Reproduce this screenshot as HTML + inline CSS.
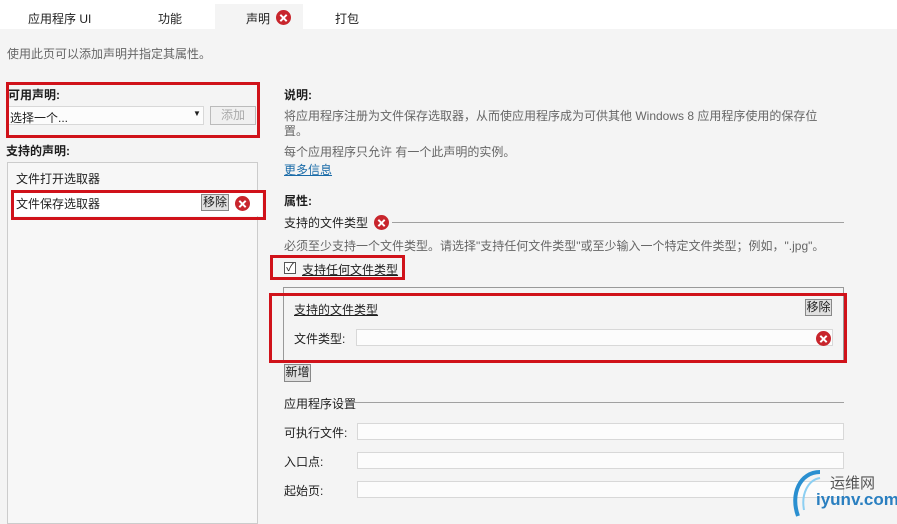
<!DOCTYPE html><html><head><meta charset="utf-8"><style>
body{margin:0;width:897px;height:517px;overflow:hidden;background:#f4f4f4;font-family:"Liberation Sans","Noto Sans CJK SC",sans-serif;font-size:12px;color:#1e1e1e;position:relative}
.a{position:absolute;white-space:nowrap}
.g{color:#666}
.red{position:absolute;border:3px solid #d0121a;box-sizing:border-box}
.x{position:absolute;width:15px;height:15px;border-radius:50%;background:#c8252c}
.x:before,.x:after{content:"";position:absolute;left:3px;top:6.5px;width:9px;height:2px;background:#fff;transform:rotate(45deg)}
.x:after{transform:rotate(-45deg)}
.inp{position:absolute;background:#fcfcfc;border:1px solid #d8d8d8;box-sizing:border-box}
.btn{position:absolute;background:#e0e0e0;border:1px solid #888;box-sizing:border-box;font-size:12px;text-align:center;line-height:15px}
.line{position:absolute;height:1px;background:#a0a0a0}
</style></head><body>
<div class="a" style="left:0;top:0;width:897px;height:29px;background:#fff"></div>
<div class="a" style="left:215px;top:4px;width:88px;height:25px;background:#f4f4f4"></div>
<div class="a" style="left:28px;top:10px">应用程序 UI</div>
<div class="a" style="left:158px;top:10px">功能</div>
<div class="a" style="left:246px;top:10px">声明</div><div class="x" style="left:276px;top:10px"></div>
<div class="a" style="left:335px;top:10px">打包</div>
<div class="a g" style="left:7px;top:45px">使用此页可以添加声明并指定其属性。</div>
<div class="a" style="left:8px;top:86px;font-weight:bold">可用声明:</div>
<div class="inp" style="left:8px;top:106px;width:196px;height:19px"></div>
<div class="a" style="left:10px;top:109px">选择一个...</div>
<div class="a" style="left:193px;top:109px;font-size:8px">▼</div>
<div class="btn" style="left:210px;top:106px;width:46px;height:19px;background:#f0f0f0;color:#aaa;border-color:#bbb;line-height:17px">添加</div>
<div class="red" style="left:6px;top:82px;width:254px;height:56px"></div>
<div class="a" style="left:6px;top:142px;font-weight:bold">支持的声明:</div>
<div class="a" style="left:7px;top:162px;width:249px;height:360px;border:1px solid #ccc;background:#f7f7f7"></div>
<div class="a" style="left:16px;top:170px">文件打开选取器</div>
<div class="a" style="left:14px;top:192px;width:248px;height:24px;background:#fff"></div>
<div class="a" style="left:16px;top:195px">文件保存选取器</div>
<div class="btn" style="left:201px;top:194px;width:28px;height:17px">移除</div>
<div class="x" style="left:235px;top:196px"></div>
<div class="red" style="left:11px;top:190px;width:255px;height:30px"></div>
<div class="a" style="left:284px;top:86px;font-weight:bold">说明:</div>
<div class="a g" style="left:284px;top:107px">将应用程序注册为文件保存选取器，从而使应用程序成为可供其他 Windows 8 应用程序使用的保存位</div>
<div class="a g" style="left:284px;top:122px">置。</div>
<div class="a g" style="left:284px;top:143px">每个应用程序只允许 有一个此声明的实例。</div>
<div class="a" style="left:284px;top:161px;color:#1a6ba8;text-decoration:underline">更多信息</div>
<div class="a" style="left:284px;top:192px;font-weight:bold">属性:</div>
<div class="a" style="left:284px;top:214px">支持的文件类型</div><div class="x" style="left:374px;top:215px"></div>
<div class="line" style="left:392px;top:222px;width:452px"></div>
<div class="a g" style="left:284px;top:237px">必须至少支持一个文件类型。请选择"支持任何文件类型"或至少输入一个特定文件类型；例如，".jpg"。</div>
<div class="a" style="left:284px;top:262px;width:12px;height:12px;border:1px solid #555;background:#fff;box-sizing:border-box;font-size:11px;line-height:10px;text-align:center">✓</div>
<div class="a" style="left:302px;top:261px;text-decoration:underline">支持任何文件类型</div>
<div class="red" style="left:270px;top:255px;width:135px;height:25px"></div>
<div class="a" style="left:283px;top:287px;width:561px;height:75px;border:1px solid #999;box-sizing:border-box"></div>
<div class="a" style="left:294px;top:301px;text-decoration:underline">支持的文件类型</div>
<div class="btn" style="left:805px;top:299px;width:27px;height:17px">移除</div>
<div class="a" style="left:294px;top:330px">文件类型:</div>
<div class="inp" style="left:356px;top:329px;width:477px;height:17px"></div>
<div class="x" style="left:816px;top:331px"></div>
<div class="red" style="left:269px;top:293px;width:578px;height:70px"></div>
<div class="btn" style="left:284px;top:364px;width:27px;height:18px">新增</div>
<div class="a" style="left:284px;top:395px">应用程序设置</div>
<div class="line" style="left:348px;top:402px;width:496px"></div>
<div class="a" style="left:284px;top:424px">可执行文件:</div>
<div class="inp" style="left:357px;top:423px;width:487px;height:17px"></div>
<div class="a" style="left:284px;top:453px">入口点:</div>
<div class="inp" style="left:357px;top:452px;width:487px;height:17px"></div>
<div class="a" style="left:284px;top:482px">起始页:</div>
<div class="inp" style="left:357px;top:481px;width:487px;height:17px"></div>
<svg class="a" style="left:790px;top:468px" width="40" height="49"><path d="M30 4 C10 4 0 26 8 48" stroke="#2a8fd0" stroke-width="4" fill="none"/><path d="M30 10 C18 12 11 26 14 42" stroke="#8ccff2" stroke-width="2" fill="none"/></svg>
<div class="a" style="left:830px;top:472px;font-size:15px;color:#555">运维网</div>
<div class="a" style="left:816px;top:490px;font-size:17px;font-weight:bold;color:#2a7fc0">iyunv.com</div>
</body></html>
